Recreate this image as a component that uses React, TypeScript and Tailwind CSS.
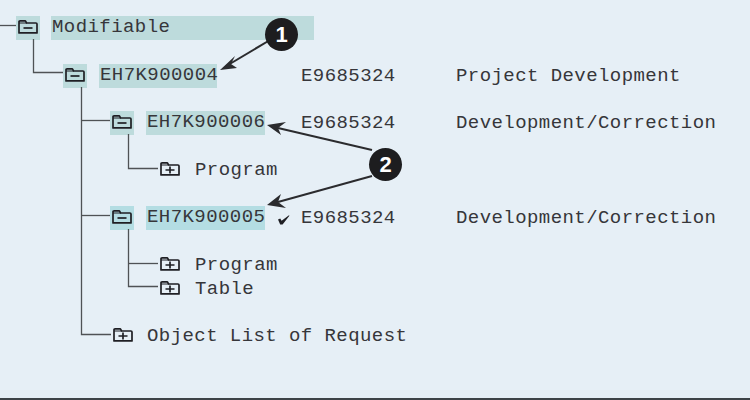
import React from 'react';

const FolderIcon = ({ open }: { open: boolean }) => (
    <svg className="mb-[2px]" width="20" height="14" viewBox="0 0 20 14" fill="none" stroke="#1f1f24" strokeWidth="1.7">
        <path d="M1 12.9V2Q1 0.9 2.1 0.9H7.4L8.6 3H17.9Q19 3 19 4.1V12.9Z" strokeLinejoin="round" />
        <path d="M1 3H9" strokeWidth="1" />
        {open ? <path d="M5.5 8H14.5" /> : <path d="M5.5 8H14.5M10 4.6V11.4" />}
    </svg>
);

const rows = [
    { id: 'mod', left: 16, gap: 'mt-0', label: 'Modifiable', labelMl: 'ml-[11px]', labelW: 'w-[263px]', ml: 'ml-0' },
    { id: 'r4', left: 63, gap: 'mt-[24px]', label: 'EH7K900004', labelMl: 'ml-[12px]', labelW: 'w-[118px]', ml: 'ml-[84px]', owner: 'E9685324', desc: 'Project Development' },
    { id: 'r6', left: 110, gap: 'mt-[23px]', label: 'EH7K900006', labelMl: 'ml-[12px]', labelW: 'w-[119px]', ml: 'ml-[36px]', owner: 'E9685324', desc: 'Development/Correction' },
];

const Label = ({ text }: { text: string }) => (
    <span className="block pl-px leading-[23px] whitespace-pre">{text}</span>
);

const Owner = ({ owner, desc, ml }: { owner: string; desc: string; ml: string }) => (
    <div className={`flex ${ml}`}>
        <span className="w-[155px]">{owner}</span>
        <span>{desc}</span>
    </div>
);

const PlainRow = ({ indent, text, mt }: { indent: string; text: string; mt: string }) => (
    <div className={`flex h-[24px] items-center ${indent} ${mt}`}>
        <div className="flex h-[24px] w-[24px] items-center justify-center">
            <FolderIcon open={false} />
        </div>
        <span className="ml-[13px] whitespace-pre">{text}</span>
    </div>
);

const Badge = ({ n, pos }: { n: string; pos: string }) => (
    <div className={`absolute ${pos} flex h-[33px] w-[33px] items-center justify-center rounded-full bg-[#1d1d1f] font-['Liberation_Sans',sans-serif] text-[22px] font-bold tracking-normal text-white`}>
        {n}
    </div>
);

export default function App() {
    return (
        <div className="relative h-[400px] w-[750px] overflow-hidden border-b-2 border-[#3d4347] bg-[#e6eff6] pt-[16px] font-['Liberation_Mono',monospace] text-[19px] tracking-[0.43px] text-[#36363a]">
            {rows.map((r) => (
                <div key={r.id} className={`flex h-[24px] items-center ${r.gap}`} style={{ paddingLeft: r.left }}>
                    <div className="flex h-[24px] w-[24px] items-center justify-center bg-[#bddbdc]">
                        <FolderIcon open />
                    </div>
                    <div className={`h-[24px] bg-[#bddbdc] ${r.labelMl} ${r.labelW}`}>
                        <Label text={r.label} />
                    </div>
                    {r.owner && <Owner owner={r.owner} desc={r.desc} ml={r.ml} />}
                </div>
            ))}

            <PlainRow indent="pl-[158px]" text="Program" mt="mt-[23px]" />

            <div className="mt-[24px] flex h-[24px] items-center pl-[110px]">
                <div className="flex h-[24px] w-[24px] items-center justify-center bg-[#b4dde3]">
                    <FolderIcon open />
                </div>
                <div className="ml-[12px] h-[24px] w-[119px] bg-[#b4dde3]">
                    <Label text="EH7K900005" />
                </div>
                <svg className="ml-[12px] mt-[3px]" width="13" height="12" viewBox="0 0 13 12" fill="#1f1f24">
                    <path d="M1 5.6 3.2 4.6 4.6 6.8 12 1.2 12.4 1.8 5.6 10.4 3.2 10.4Z" />
                </svg>
                <Owner owner="E9685324" desc="Development/Correction" ml="ml-[11px]" />
            </div>

            <PlainRow indent="pl-[158px]" text="Program" mt="mt-[23px]" />
            <PlainRow indent="pl-[158px]" text="Table" mt="mt-0" />

            <div className="mt-[23px] flex h-[24px] items-center pl-[111px]">
                <div className="flex h-[24px] w-[24px] items-center justify-center">
                    <FolderIcon open={false} />
                </div>
                <span className="ml-[12px] whitespace-pre">Object List of Request</span>
            </div>

            {/* tree connectors and callout arrows */}
            <svg className="pointer-events-none absolute inset-0" width="750" height="400" fill="none">
                <g stroke="#4f5255" strokeWidth="1.3">
                    <path d="M0 25.5H16" />
                    <path d="M33.5 39V72.5H63" />
                    <path d="M81.5 87V334.5H111" />
                    <path d="M81.5 120.5H110" />
                    <path d="M81.5 215.5H110" />
                    <path d="M128.5 134V168.5H158" />
                    <path d="M128.5 229V286.5H158" />
                    <path d="M128.5 263.5H158" />
                </g>
                <g stroke="#2b2b2e" strokeWidth="2">
                    <path d="M270 40 228 65" />
                    <path d="M372 150 278 128" />
                    <path d="M372 176 278 202" />
                </g>
                <g fill="#2b2b2e">
                    <path d="M220 70 235 56 231 64 237 68Z" />
                    <path d="M267 125 286 122 278 128 281 135Z" />
                    <path d="M267 205 281 194 278 202 286 208Z" />
                </g>
            </svg>
            <Badge n="1" pos="left-[265px] top-[18px]" />
            <Badge n="2" pos="left-[369px] top-[148px]" />
        </div>
    );
}
